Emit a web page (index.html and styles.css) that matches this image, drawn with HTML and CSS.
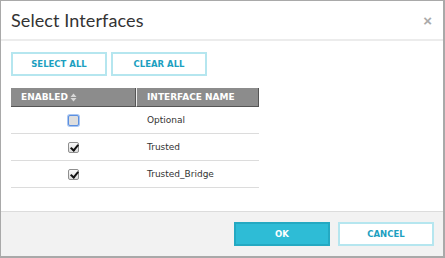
FILE: index.html
```html
<!DOCTYPE html>
<html>
<head>
<title>Select Interfaces</title>
<link rel="stylesheet" href="styles.css">
</head>
<body>
  <div class="dialog">
    <div class="dialog-header">
      <h1>Select Interfaces</h1>
      <span class="close">&times;</span>
    </div>

    <div class="dialog-body">
      <div class="toolbar">
        <button class="btn btn-outline">SELECT ALL</button>
        <button class="btn btn-outline">CLEAR ALL</button>
      </div>

      <table class="iface-table">
        <colgroup>
          <col class="c1">
          <col class="c2">
        </colgroup>
        <thead>
          <tr>
            <th class="col-enabled">ENABLED
              <svg class="sort" width="7" height="9" viewBox="0 0 7 9">
                <path d="M0.5 4 L3.5 0.5 L6.5 4 Z" fill="#d8d8d8"/>
                <path d="M0.5 5 L3.5 8.5 L6.5 5 Z" fill="#d8d8d8"/>
              </svg>
            </th>
            <th class="col-name">INTERFACE NAME</th>
          </tr>
        </thead>
        <tbody>
          <tr>
            <td class="center"><span class="check focused"></span></td>
            <td>Optional</td>
          </tr>
          <tr>
            <td class="center"><span class="check checked"></span></td>
            <td>Trusted</td>
          </tr>
          <tr>
            <td class="center"><span class="check checked"></span></td>
            <td>Trusted_Bridge</td>
          </tr>
        </tbody>
      </table>
    </div>

    <div class="dialog-footer">
      <button class="btn btn-primary">OK</button>
      <button class="btn btn-outline">CANCEL</button>
    </div>
  </div>
</body>
</html>
```

FILE: styles.css
```css
body {
  margin: 0;
  padding: 0;
  font-family: "DejaVu Sans", Verdana, sans-serif;
  background-color: #fff;
}

.dialog {
  width: 445px;
  height: 258px;
  box-sizing: border-box;
  border: 1px solid #a9a9a9;
  border-right-width: 2px;
  border-bottom-width: 2px;
  display: flex;
  flex-direction: column;
  background-color: #fff;
}

.dialog-header {
  height: 38px;
  border-bottom: 2px solid #ececec;
  display: flex;
  align-items: center;
  justify-content: space-between;
  padding: 0 11px 0 10px;
}

.dialog-header h1 {
  margin: 0;
  font-family: Lato, "Open Sans", sans-serif;
  font-weight: 400;
  font-size: 18px;
  color: #333;
  letter-spacing: 0.1px;
}

.close {
  color: #aaa;
  font-size: 15px;
  font-weight: bold;
  font-family: "Liberation Sans", sans-serif;
}

.dialog-body {
  flex: 1;
  padding: 11px 10px 0 10px;
}

.toolbar {
  display: flex;
  gap: 4px;
  margin-bottom: 12px;
}

.btn {
  width: 96px;
  height: 24px;
  font-family: "DejaVu Sans", Verdana, sans-serif;
  font-size: 8.5px;
  font-weight: bold;
  box-sizing: border-box;
  cursor: pointer;
  padding: 0;
}

.btn-outline {
  background-color: #fff;
  color: #1c9fc0;
  border: 2px solid #b5e6ef;
}

.btn-primary {
  background-color: #2ebcd6;
  color: #fff;
  border: 2px solid #24a9c2;
}

.iface-table {
  border-collapse: separate;
  border-spacing: 0;
  table-layout: fixed;
  width: 248px;
  font-size: 9px;
}

.c1 {
  width: 125px;
}

.c2 {
  width: 123px;
}

.iface-table th {
  background-color: #8c8c8c;
  color: #fff;
  text-align: left;
  height: 18px;
  padding: 0 0 0 10px;
  font-size: 9px;
  border-bottom: 1px solid #555;
  border-right: 1px solid #555;
}

.iface-table th.col-name {
  border-left: 1px solid #eee;
}

.sort {
  vertical-align: middle;
  margin-left: -1px;
}

.iface-table td {
  height: 26px;
  padding: 0 0 0 11px;
  color: #333;
  border-bottom: 1px solid #dcdcdc;
}

.iface-table td.center {
  text-align: center;
  padding: 0;
}

.check {
  display: inline-block;
  width: 9px;
  height: 9px;
  border: 1px solid #8f8f8f;
  border-radius: 2px;
  background: linear-gradient(#fafafa, #dcdcdc);
  vertical-align: middle;
  position: relative;
}

.check.focused {
  border-color: #5b8fe0;
  box-shadow: 0 0 0 1px #a9c6f2;
  background: #dedede;
}

.check.checked::after {
  content: "";
  position: absolute;
  left: 3px;
  top: 0px;
  width: 3px;
  height: 6px;
  border: solid #111;
  border-width: 0 2px 2px 0;
  transform: rotate(40deg);
}

.dialog-footer {
  height: 44px;
  border-top: 1px solid #dcdcdc;
  background-color: #f2f2f2;
  display: flex;
  align-items: center;
  justify-content: flex-end;
  gap: 8px;
  padding: 0 9px 0 0;
}
```
